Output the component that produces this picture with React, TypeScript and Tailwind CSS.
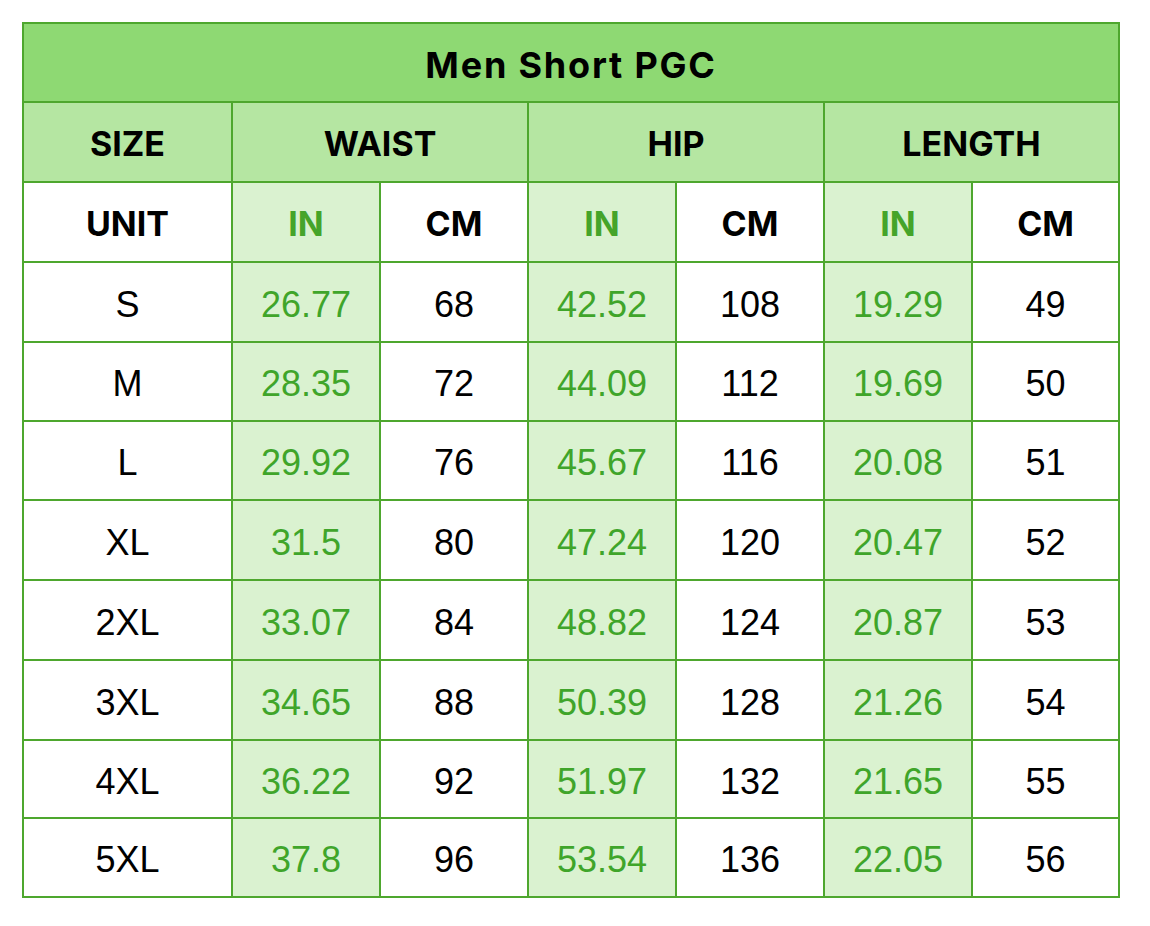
import React from "react";

const rows: [string, string, string, string, string, string, string][] = [
  ["S", "26.77", "68", "42.52", "108", "19.29", "49"],
  ["M", "28.35", "72", "44.09", "112", "19.69", "50"],
  ["L", "29.92", "76", "45.67", "116", "20.08", "51"],
  ["XL", "31.5", "80", "47.24", "120", "20.47", "52"],
  ["2XL", "33.07", "84", "48.82", "124", "20.87", "53"],
  ["3XL", "34.65", "88", "50.39", "128", "21.26", "54"],
  ["4XL", "36.22", "92", "51.97", "132", "21.65", "55"],
  ["5XL", "37.8", "96", "53.54", "136", "22.05", "56"],
];

// row heights read off the sheet, they are not all the same
const rowH = ["h-[80px]", "h-[79px]", "h-[79px]", "h-[80px]", "h-[80px]", "h-[80px]", "h-[78px]", "h-[79px]"];

const cell = "border-2 border-[#4ea72e] text-center align-middle p-0";
const head = "font-['Inter',sans-serif] font-bold text-[34px] text-black pt-[2px]";
const num = "font-['Liberation_Sans',Arial,sans-serif] text-[36px] pt-[5px]";

export default function App(): React.ReactElement {
  return (
    <div className="w-[1150px] h-[926px] bg-white pt-[22px] pl-[22px]">
      <table className="border-collapse table-fixed w-[1096px]">
        <colgroup>
          <col className="w-[209px]" />
          <col className="w-[148px]" />
          <col className="w-[148px]" />
          <col className="w-[148px]" />
          <col className="w-[148px]" />
          <col className="w-[148px]" />
          <col className="w-[147px]" />
        </colgroup>
        <tbody>
          <tr className="h-[79px]">
            <td
              colSpan={7}
              className={`${cell} pt-[4px] font-['Inter',sans-serif] font-bold text-[36px] tracking-[1.8px] text-black bg-[#8ed973]`}
            >
              Men Short PGC
            </td>
          </tr>
          <tr className="h-[80px]">
            <td className={`${cell} ${head} bg-[#b5e6a2]`}>SIZE</td>
            <td colSpan={2} className={`${cell} ${head} bg-[#b5e6a2]`}>WAIST</td>
            <td colSpan={2} className={`${cell} ${head} bg-[#b5e6a2]`}>HIP</td>
            <td colSpan={2} className={`${cell} ${head} bg-[#b5e6a2]`}>LENGTH</td>
          </tr>
          <tr className="h-[80px]">
            <td className={`${cell} ${head} bg-white`}>UNIT</td>
            {[0, 1, 2].map((i) => (
              <React.Fragment key={i}>
                <td className={`${cell} ${head} bg-[#daf2d0] !text-[#45a42a]`}>IN</td>
                <td className={`${cell} ${head} bg-white`}>CM</td>
              </React.Fragment>
            ))}
          </tr>
          {rows.map((r, i) => (
            <tr key={r[0]} className={rowH[i]}>
              {r.map((v, j) => (
                <td
                  key={j}
                  className={`${cell} ${num} ${
                    j % 2 === 1 ? "bg-[#daf2d0] text-[#3fa52a]" : "bg-white text-black"
                  }`}
                >
                  {v}
                </td>
              ))}
            </tr>
          ))}
        </tbody>
      </table>
    </div>
  );
}
